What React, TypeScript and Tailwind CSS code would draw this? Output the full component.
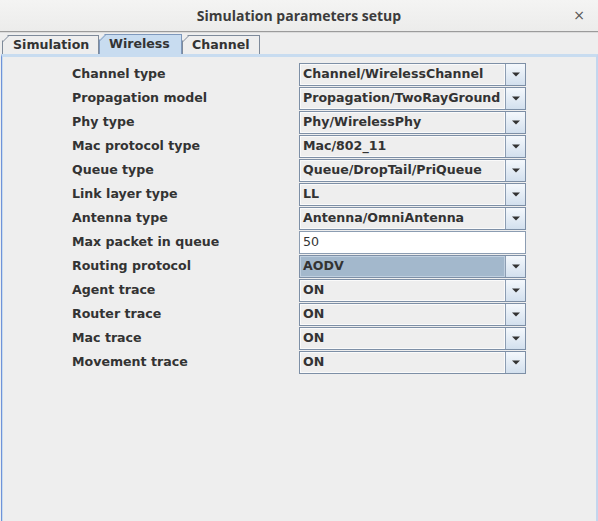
import React from "react";

type Row = { label: string; value: string; kind: "combo" | "text" | "selected" };

const rows: Row[] = [
  { label: "Channel type", value: "Channel/WirelessChannel", kind: "combo" },
  { label: "Propagation model", value: "Propagation/TwoRayGround", kind: "combo" },
  { label: "Phy type", value: "Phy/WirelessPhy", kind: "combo" },
  { label: "Mac protocol type", value: "Mac/802_11", kind: "combo" },
  { label: "Queue type", value: "Queue/DropTail/PriQueue", kind: "combo" },
  { label: "Link layer type", value: "LL", kind: "combo" },
  { label: "Antenna type", value: "Antenna/OmniAntenna", kind: "combo" },
  { label: "Max packet in queue", value: "50", kind: "text" },
  { label: "Routing protocol", value: "AODV", kind: "selected" },
  { label: "Agent trace", value: "ON", kind: "combo" },
  { label: "Router trace", value: "ON", kind: "combo" },
  { label: "Mac trace", value: "ON", kind: "combo" },
  { label: "Movement trace", value: "ON", kind: "combo" },
];

function Arrow() {
  return (
    <div className="w-[20px] h-full flex items-center justify-center bg-gradient-to-b from-[#f4f8fc] to-[#d3e0ee] border-l border-[#8c9db2]">
      <svg width="8" height="5" viewBox="0 0 8 5">
        <path d="M0 0.5 L8 0.5 L4 4.5 Z" fill="#333333" />
      </svg>
    </div>
  );
}

function Field({ row }: { row: Row }) {
  if (row.kind === "text") {
    return (
      <div className="w-[227px] h-[23px] border border-[#8c9db2] bg-white flex items-center pl-[3px] text-[12.6px] text-[#333333] font-normal">
        {row.value}
      </div>
    );
  }
  const sel = row.kind === "selected";
  return (
    <div className="w-[227px] h-[23px] border border-[#7d8fa6] flex">
      <div
        className={
          sel
            ? "flex-1 h-full bg-[#a3b8cc] border border-[#c0d0e0] flex items-center pl-[2px] text-[12.6px] font-bold text-[#333333] whitespace-nowrap overflow-hidden"
            : "flex-1 h-full bg-[#eeeeee] border border-[#fafafa] flex items-center pl-[2px] text-[12.6px] font-bold text-[#333333] whitespace-nowrap overflow-hidden"
        }
      >
        {row.value}
      </div>
      <Arrow />
    </div>
  );
}

export default function App() {
  return (
    <div
      className="w-[598px] h-[521px] bg-[#eeeeee] flex flex-col overflow-hidden"
      style={{ fontFamily: '"DejaVu Sans", sans-serif' }}
    >
      {/* Title bar */}
      <div className="h-[32px] bg-gradient-to-b from-[#f4f4f3] to-[#ececeb] border-b border-[#9b9b9b] flex items-center relative shrink-0">
        <div
          className="flex-1 text-center text-[14px] font-bold text-[#3c3c3c] pb-[1px]"
          style={{ fontFamily: '"Open Sans", sans-serif' }}
        >
          Simulation parameters setup
        </div>
        <div className="absolute right-[13px] top-[5px] text-[14px] text-[#555555]">×</div>
      </div>
      <div className="h-[1px] bg-[#dcdcdc] shrink-0" />
      {/* Tabs */}
      <div className="h-[21px] flex items-end pl-[2px] shrink-0">
        <div className="relative h-[19px] w-[97px] border border-b-0 border-[#7e8a9a] bg-[#eeeeee] flex items-center pl-[10px] text-[12.6px] font-bold text-[#333333] [clip-path:polygon(6px_0,100%_0,100%_100%,0_100%,0_6px)]">
          <svg className="absolute left-[-1px] top-[-1px]" width="8" height="8" viewBox="0 0 8 8">
            <path d="M0.5 7 L7 0.5" stroke="#7e8a9a" strokeWidth="1" />
          </svg>
          Simulation
        </div>
        <div className="relative h-[20px] w-[83px] border border-b-0 border-[#7e98bc] bg-[#c8dcf0] flex items-center pl-[9px] text-[12.6px] font-bold text-[#333333] [clip-path:polygon(6px_0,100%_0,100%_100%,0_100%,0_6px)]">
          <svg className="absolute left-[-1px] top-[-1px]" width="8" height="8" viewBox="0 0 8 8">
            <path d="M0.5 7 L7 0.5" stroke="#7e98bc" strokeWidth="1" />
          </svg>
          Wireless
        </div>
        <div className="relative h-[19px] w-[78px] border border-b-0 border-[#7e8a9a] bg-[#eeeeee] flex items-center pl-[9px] text-[12.6px] font-bold text-[#333333] [clip-path:polygon(6px_0,100%_0,100%_100%,0_100%,0_6px)]">
          <svg className="absolute left-[-1px] top-[-1px]" width="8" height="8" viewBox="0 0 8 8">
            <path d="M0.5 7 L7 0.5" stroke="#7e8a9a" strokeWidth="1" />
          </svg>
          Channel
        </div>
      </div>
      {/* Panel */}
      <div className="flex-1 ml-[1px] border-t-[3px] border-t-[#c8dcf0] border-l border-l-[#6f93d8] border-r-[2px] border-r-[#c3d6ee] shadow-[inset_1px_0_0_#c8dcf0]">
        <div className="flex flex-col gap-[1px] pt-[6px] pl-[70px]">
          {rows.map((r) => (
            <div key={r.label} className="flex items-center h-[23px]">
              <div className="w-[227px] text-[12.6px] font-bold text-[#333333] whitespace-nowrap">{r.label}</div>
              <Field row={r} />
            </div>
          ))}
        </div>
      </div>
    </div>
  );
}
